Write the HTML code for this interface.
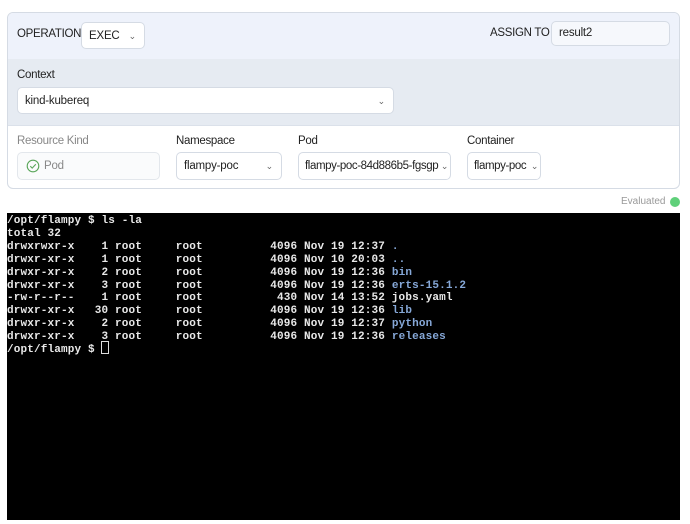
<!DOCTYPE html>
<html><head><style>
body{margin:0;width:690px;height:524px;background:#fff;font-family:"Liberation Sans",sans-serif;position:relative;overflow:hidden;color:#222}
.a{position:absolute}
.box{position:absolute;background:#fff;border:1px solid #d5dbe4;border-radius:5px;box-sizing:border-box;font-size:11.5px;line-height:26px;padding-left:7px;color:#222;letter-spacing:-0.2px}
.chev{position:absolute;right:8px;top:0;font-size:9px;color:#666}
.lbl{position:absolute;font-size:11.5px;color:#222;letter-spacing:-0.3px}
pre{margin:0;font-family:"Liberation Mono",monospace;font-size:11px;letter-spacing:0.15px;line-height:12.9px;color:#e8e8e8;font-weight:bold}
.d{color:#86a8d8}
</style></head><body>
<div class="a" style="left:7px;top:12px;width:673px;height:177px;border:1px solid #d5dbe4;border-radius:6px;box-sizing:border-box;overflow:hidden">
 <div class="a" style="left:0;top:0;width:100%;height:46px;background:#eef2fb;border-bottom:1px solid #dbe1ea"></div>
 <div class="a" style="left:0;top:46px;width:100%;height:66px;background:#e6ebf2;border-bottom:1px solid #dbe1ea"></div>
</div>
<div class="lbl" style="left:17px;top:28px">OPERATION</div>
<div class="box" style="left:81px;top:22px;width:64px;height:27px">EXEC<span class="chev">&#8964;</span></div>
<div class="lbl" style="left:490px;top:27px">ASSIGN TO</div>
<div class="box" style="left:551px;top:21px;width:119px;height:25px;line-height:23px;background:#f6f8fc">result2</div>
<div class="lbl" style="left:17px;top:69px">Context</div>
<div class="box" style="left:17px;top:87px;width:377px;height:27px">kind-kubereq<span class="chev" style="right:8px">&#8964;</span></div>
<div class="lbl" style="left:17px;top:135px;color:#888">Resource Kind</div>
<div class="box" style="left:17px;top:152px;width:143px;height:28px;background:#fafbfc;border-color:#e3e7ec;color:#888;padding-left:26px;line-height:27px">Pod</div>
<svg class="a" style="left:26px;top:159px" width="14" height="14" viewBox="0 0 14 14"><circle cx="7" cy="7" r="5.8" fill="none" stroke="#5aa65a" stroke-width="1.1"/><path d="M4.3 7.2l1.9 1.9 3.6-3.8" fill="none" stroke="#5aa65a" stroke-width="1.1"/></svg>
<div class="lbl" style="left:176px;top:135px">Namespace</div>
<div class="box" style="left:176px;top:152px;width:106px;height:28px;line-height:27px">flampy-poc<span class="chev">&#8964;</span></div>
<div class="lbl" style="left:298px;top:135px">Pod</div>
<div class="box" style="left:298px;top:152px;width:153px;height:28px;line-height:27px;white-space:nowrap;overflow:hidden;letter-spacing:-0.4px;padding-left:6px">flampy-poc-84d886b5-fgsgp<span class="chev" style="right:2px;background:#fff">&#8964;</span></div>
<div class="lbl" style="left:467px;top:135px">Container</div>
<div class="box" style="left:467px;top:152px;width:74px;height:28px;line-height:27px;white-space:nowrap;overflow:hidden;letter-spacing:-0.4px;padding-left:6px">flampy-poc<span class="chev" style="right:2px;background:#fff">&#8964;</span></div>
<div class="a" style="left:621px;top:196px;font-size:10px;color:#999">Evaluated</div>
<div class="a" style="left:670px;top:197px;width:10px;height:10px;border-radius:50%;background:#5fd07a"></div>
<div class="a" style="left:7px;top:213px;width:673px;height:307px;background:#000">
<pre style="padding:2px 0 0 0">/opt/flampy $ ls -la
total 32
drwxrwxr-x    1 root     root          4096 Nov 19 12:37 <span class="d">.</span>
drwxr-xr-x    1 root     root          4096 Nov 10 20:03 <span class="d">..</span>
drwxr-xr-x    2 root     root          4096 Nov 19 12:36 <span class="d">bin</span>
drwxr-xr-x    3 root     root          4096 Nov 19 12:36 <span class="d">erts-15.1.2</span>
-rw-r--r--    1 root     root           430 Nov 14 13:52 jobs.yaml
drwxr-xr-x   30 root     root          4096 Nov 19 12:36 <span class="d">lib</span>
drwxr-xr-x    2 root     root          4096 Nov 19 12:37 <span class="d">python</span>
drwxr-xr-x    3 root     root          4096 Nov 19 12:36 <span class="d">releases</span>
/opt/flampy $ </pre>
<div class="a" style="left:94px;top:128px;width:6px;height:11px;border:1px solid #ddd"></div>
</div>
</body></html>
